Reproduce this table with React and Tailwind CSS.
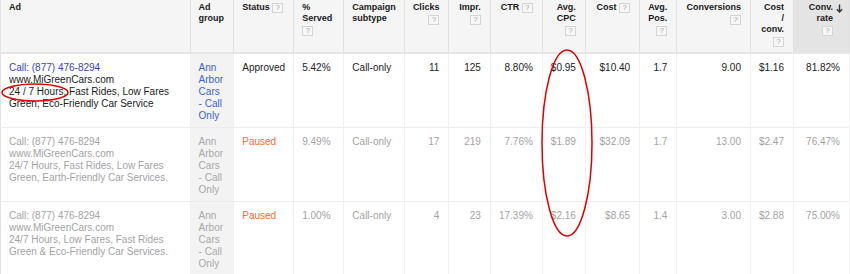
import React from "react";

function Help() {
  return (
    <span className="inline-flex h-[10px] w-[11px] items-center justify-center border border-[#d4d4d4] bg-[#f7f7f7] align-middle text-[8px] font-normal leading-none text-[#a8a8a8]">
      ?
    </span>
  );
}

const cols = [193, 44, 60, 51, 60, 44, 42, 52, 41, 55, 35, 74, 41, 57];

const headers = [
  { lines: ["Ad"], align: "left" },
  { lines: ["Ad", "group"], align: "left" },
  { lines: [["Status", true]], align: "left" },
  { lines: ["%", "Served", "?"], align: "left" },
  { lines: ["Campaign", "subtype"], align: "left" },
  { lines: ["Clicks", "?"], align: "right" },
  { lines: ["Impr.", "?"], align: "right" },
  { lines: [["CTR", true]], align: "right" },
  { lines: ["Avg.", "CPC", "?"], align: "right" },
  { lines: [["Cost", true]], align: "right" },
  { lines: ["Avg.", "Pos.", "?"], align: "right" },
  { lines: ["Conversions", "?"], align: "right" },
  { lines: ["Cost", "/", "conv.", "?"], align: "right" },
  { lines: ["Conv.", "rate", "?"], align: "right", sorted: true },
];

const rows = [
  {
    active: true,
    ad: ["Call: (877) 476-8294", "www.MiGreenCars.com", "24 / 7 Hours, Fast Rides, Low Fares", "Green, Eco-Friendly Car Service"],
    status: "Approved",
    vals: ["5.42%", "Call-only", "11", "125", "8.80%", "$0.95", "$10.40", "1.7", "9.00", "$1.16", "81.82%"],
  },
  {
    active: false,
    ad: ["Call: (877) 476-8294", "www.MiGreenCars.com", "24/7 Hours, Fast Rides, Low Fares", "Green, Earth-Friendly Car Services."],
    status: "Paused",
    vals: ["9.49%", "Call-only", "17", "219", "7.76%", "$1.89", "$32.09", "1.7", "13.00", "$2.47", "76.47%"],
  },
  {
    active: false,
    ad: ["Call: (877) 476-8294", "www.MiGreenCars.com", "24/7 Hours, Low Fares, Fast Rides", "Green & Eco-Friendly Car Services."],
    status: "Paused",
    vals: ["1.00%", "Call-only", "4", "23", "17.39%", "$2.16", "$8.65", "1.4", "3.00", "$2.88", "75.00%"],
  },
];

export default function App() {
  return (
    <div
      className="relative h-[274px] w-[850px] overflow-hidden bg-white"
      style={{ fontFamily: '"Liberation Sans", Arial, sans-serif' }}
    >
      <table className="table-fixed border-collapse border-l border-[#e2e2e2]">
        <colgroup>
          {cols.map((w, i) => (
            <col key={i} style={{ width: w }} />
          ))}
        </colgroup>
        <thead>
          <tr className="h-[53px]">
            {headers.map((h, i) => (
              <th
                key={i}
                className={`relative border-b-2 border-r border-b-[#e6e6e6] border-r-[#e0e0e0] pl-2 pt-[2px] align-top text-[9px] font-bold leading-[11px] text-[#1a1a1a] ${
                  h.sorted ? "bg-[#e4e4e4] pr-[16px]" : "bg-[#f5f5f5]"
                } ${h.align === "right" ? (h.sorted ? "text-right" : "pr-[9px] text-right") : "pr-2 text-left"}`}
              >
                {h.lines.map((l, j) =>
                  Array.isArray(l) ? (
                    <div key={j} className="whitespace-nowrap">
                      {l[0]} <Help />
                    </div>
                  ) : l === "?" ? (
                    <div key={j} className="pt-[1px]">
                      <Help />
                    </div>
                  ) : (
                    <div key={j} className="whitespace-nowrap">
                      {l}
                    </div>
                  )
                )}
                {h.sorted && (
                  <svg className="absolute right-[6px] top-[4px]" width="7" height="9" viewBox="0 0 7 9">
                    <path d="M3.5 0.5V8M0.8 5.2L3.5 8L6.2 5.2" stroke="#333" strokeWidth="1.4" fill="none" />
                  </svg>
                )}
              </th>
            ))}
          </tr>
        </thead>
        <tbody>
          {rows.map((r, ri) => {
            const txt = r.active ? "text-[#222]" : "text-[#a3a3a3]";
            return (
              <tr key={ri} className="h-[74px] border-b border-[#ececec] text-[10px] leading-[12px]">
                <td className={`border-r border-[#f0f0f0] px-2 pt-2 align-top ${txt}`}>
                  <div className={r.active ? "text-[#3545c9]" : ""}>{r.ad[0]}</div>
                  <div>{r.ad[1]}</div>
                  <div className="whitespace-nowrap">{r.ad[2]}</div>
                  <div className="whitespace-nowrap">{r.ad[3]}</div>
                </td>
                <td
                  className={`border-r border-[#f0f0f0] bg-[#f3f3f3] px-2 pt-2 align-top ${
                    r.active ? "text-[#3b62d6]" : "text-[#a8a8a8]"
                  }`}
                >
                  <div>Ann</div>
                  <div>Arbor</div>
                  <div>Cars</div>
                  <div>- Call</div>
                  <div>Only</div>
                </td>
                <td
                  className={`border-r border-[#f0f0f0] px-2 pt-2 align-top ${
                    r.active ? "text-[#222]" : "text-[#ff6b2b]"
                  }`}
                >
                  {r.status}
                </td>
                {r.vals.map((v, vi) => (
                  <td
                    key={vi}
                    className={`border-r border-[#f0f0f0] px-2 pt-2 align-top ${txt} ${
                      vi < 2 ? "text-left" : "pr-[9px] text-right"
                    }`}
                  >
                    {v}
                  </td>
                ))}
              </tr>
            );
          })}
        </tbody>
      </table>
      <svg className="pointer-events-none absolute left-0 top-0" width="850" height="274">
        <ellipse cx="35" cy="92.5" rx="33" ry="8.5" fill="none" stroke="#e00000" strokeWidth="1.5" />
        <ellipse cx="567" cy="143" rx="25" ry="93" fill="none" stroke="#e00000" strokeWidth="1.5" />
      </svg>
    </div>
  );
}
